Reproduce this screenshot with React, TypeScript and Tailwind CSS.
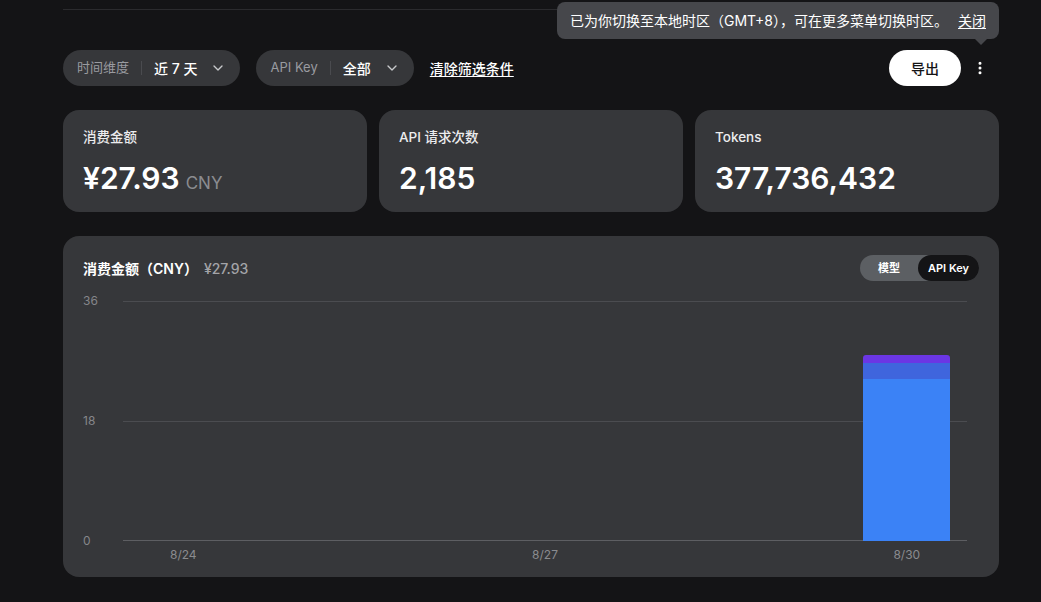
import { ChevronDown, MoreVertical } from 'lucide-react';

const font = { fontFamily: 'Inter, "Noto Sans CJK SC", sans-serif' };

const days = [
  { label: '8/24', segments: [] as { value: number; color: string }[] },
  { label: '8/25', segments: [] },
  { label: '8/26', segments: [] },
  { label: '8/27', segments: [] },
  { label: '8/28', segments: [] },
  { label: '8/29', segments: [] },
  {
    label: '8/30',
    segments: [
      { value: 1.2, color: '#6b36e4' },
      { value: 2.4, color: '#3f65dd' },
      { value: 24.33, color: '#3b82f6' },
    ],
  },
];

const showLabel = ['8/24', '8/27', '8/30'];
const maxY = 36;

function FilterPill({ name, value }: { name: string; value: string }) {
  return (
    <div className="flex h-9 items-center rounded-full bg-[#36373a] pl-[14px] pr-[14px]">
      <span className="text-[13px] text-[#9a9ba0]">{name}</span>
      <span className="mx-[12px] h-[14px] w-px bg-[#4a4b4f]"></span>
      <span className="text-[14px] font-medium text-white">{value}</span>
      <ChevronDown className="ml-[13px] h-4 w-4 text-[#c8c9cc]" strokeWidth={2} />
    </div>
  );
}

function StatCard({ label, value, unit }: { label: string; value: string; unit?: string }) {
  return (
    <div className="flex h-[102px] flex-col rounded-2xl bg-[#36373a] px-5 pt-[17px]">
      <div className="text-[13.5px] font-medium leading-5 text-[#ececee]">{label}</div>
      <div className="mt-[13px] flex items-baseline">
        <span className="text-[30px] font-semibold leading-9 text-white">{value}</span>
        {unit && <span className="ml-[6px] text-[17px] text-[#8b8c90]">{unit}</span>}
      </div>
    </div>
  );
}

export default function App() {
  return (
    <div className="relative min-h-screen bg-[#141416] pl-[63px] pr-[42px]" style={font}>
      {/* header divider */}
      <div className="h-[10px] border-b border-[#2b2b2e]"></div>

      {/* timezone notice */}
      <div className="absolute right-[42px] top-[2px] flex h-[37px] items-center rounded-lg bg-[#46474b] px-[13px] text-[14px] text-white">
        <span>已为你切换至本地时区（GMT+8），可在更多菜单切换时区。</span>
        <span className="ml-[10px] underline underline-offset-2">关闭</span>
        <span className="absolute -bottom-[6px] right-[12px] h-0 w-0 border-l-[6px] border-r-[6px] border-t-[6px] border-l-transparent border-r-transparent border-t-[#46474b]"></span>
      </div>

      {/* filters */}
      <div className="mt-[40px] flex h-9 items-center">
        <FilterPill name="时间维度" value="近 7 天" />
        <div className="ml-4">
          <FilterPill name="API Key" value="全部" />
        </div>
        <button className="ml-4 text-[14px] font-medium text-white underline underline-offset-2">清除筛选条件</button>
        <div className="flex-1"></div>
        <button className="h-9 w-[72px] rounded-full bg-white text-[14px] font-medium text-[#141416]">导出</button>
        <div className="flex w-[38px] justify-center">
          <MoreVertical className="h-4 w-4 text-white" strokeWidth={2.5} />
        </div>
      </div>

      {/* stats */}
      <div className="mt-6 grid grid-cols-3 gap-3">
        <StatCard label="消费金额" value="¥27.93" unit="CNY" />
        <StatCard label="API 请求次数" value="2,185" />
        <StatCard label="Tokens" value="377,736,432" />
      </div>

      {/* spend chart */}
      <div className="mt-6 h-[341px] rounded-2xl bg-[#36373a] pl-5 pr-5 pt-[19px]">
        <div className="flex h-[26px] items-center justify-between">
          <div className="text-[14px]">
            <span className="font-semibold text-white">消费金额（CNY）</span>
            <span className="ml-[6px] font-medium text-[#a3a4a8]">¥27.93</span>
          </div>
          <div className="flex h-[26px] items-center rounded-full bg-[#5c5f63] text-[11px] font-semibold text-white">
            <span className="px-[18px]">模型</span>
            <span className="flex h-[26px] items-center rounded-full bg-[#141416] px-[10px]">API Key</span>
          </div>
        </div>

        <div className="mt-[14px] flex pr-3">
          <div className="flex h-[252px] w-10 flex-col justify-between text-[12px] leading-3 text-[#85868a]">
            <span>36</span>
            <span>18</span>
            <span>0</span>
          </div>
          <div className="flex-1 pt-[6px]">
            <div className="relative h-[240px]">
              <div className="absolute inset-x-0 top-0 h-px bg-[#4b4c50]"></div>
              <div className="absolute inset-x-0 top-1/2 h-px bg-[#4b4c50]"></div>
              <div className="absolute inset-x-0 bottom-0 h-px bg-[#5d5e62]"></div>
              <div className="relative flex h-full">
                {days.map((d) => (
                  <div key={d.label} className="flex flex-1 flex-col items-center justify-end">
                    {d.segments.length > 0 && (
                      <div className="flex w-[87px] flex-col overflow-hidden rounded-t-[3px]">
                        {d.segments.map((s, i) => (
                          <div
                            key={i}
                            style={{ height: `${(s.value / maxY) * 240}px`, backgroundColor: s.color }}
                          ></div>
                        ))}
                      </div>
                    )}
                  </div>
                ))}
              </div>
            </div>
            <div className="mt-[5px] flex text-[12px] text-[#8a8b8f]">
              {days.map((d) => (
                <div key={d.label} className="flex-1 text-center">
                  {showLabel.includes(d.label) ? d.label : ''}
                </div>
              ))}
            </div>
          </div>
        </div>
      </div>
    </div>
  );
}
